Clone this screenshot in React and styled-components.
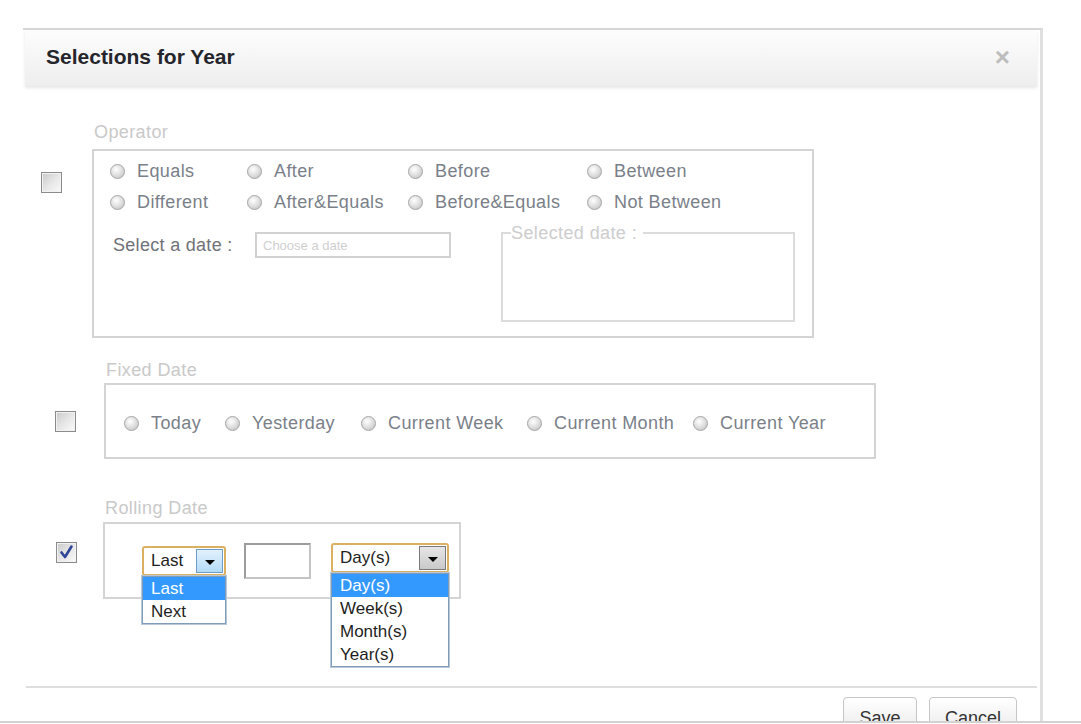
import styled, { createGlobalStyle } from "styled-components";

const GlobalStyle = createGlobalStyle`
  html, body {
    margin: 0;
    padding: 0;
    background: #fff;
    font-family: "Liberation Sans", Arial, sans-serif;
  }
`;

const radioRows = [
  ["Equals", "After", "Before", "Between"],
  ["Different", "After&Equals", "Before&Equals", "Not Between"],
];

const fixedOptions = ["Today", "Yesterday", "Current Week", "Current Month", "Current Year"];

function App() {
  return (
    <>
      <GlobalStyle />
      <Frame>
        <Modal>
          <Header>
            <Title>Selections for Year</Title>
            <Close>×</Close>
          </Header>
          <Body>
            <Section $pad={18} $gap={30} $top={0}>
              <CheckBox $offset={50} />
              <Group>
                <GroupLabel $space={7}>Operator</GroupLabel>
                <Box $w={722} $h={189} $padTop={9} $padLeft={16}>
                  <RadioGrid>
                    {radioRows.map((row) =>
                      row.map((text) => (
                        <RadioItem key={text}>
                          <Radio />
                          <RadioText>{text}</RadioText>
                        </RadioItem>
                      ))
                    )}
                  </RadioGrid>
                  <DateRow>
                    <DatePick>
                      <DateLabel>Select a date :</DateLabel>
                      <DateInput placeholder="Choose a date" />
                    </DatePick>
                    <SelectedSet>
                      <SelectedLegend>Selected date :</SelectedLegend>
                    </SelectedSet>
                  </DateRow>
                </Box>
              </Group>
            </Section>

            <Section $pad={32} $gap={28} $top={22}>
              <CheckBox $offset={51} />
              <Group>
                <GroupLabel $space={3}>Fixed Date</GroupLabel>
                <Box $w={772} $h={76} $padTop={4} $padLeft={18} $center>
                  <FixedRow>
                    {fixedOptions.map((text) => (
                      <RadioItem key={text}>
                        <Radio />
                        <RadioText>{text}</RadioText>
                      </RadioItem>
                    ))}
                  </FixedRow>
                </Box>
              </Group>
            </Section>

            <Section $pad={33} $gap={26} $top={39}>
              <CheckBox $offset={44}>
                <svg width="17" height="17" viewBox="0 0 17 17">
                  <path
                    d="M3.5 8.5 L7 13 L13.5 2.5"
                    fill="none"
                    stroke="#2f4596"
                    strokeWidth="2.6"
                    strokeLinecap="round"
                    strokeLinejoin="round"
                  />
                </svg>
              </CheckBox>
              <Group>
                <GroupLabel $space={4}>Rolling Date</GroupLabel>
                <Box $w={358} $h={77} $padTop={19} $padLeft={37}>
                  <RollRow>
                    <Select $w={84} $shift={3}>
                      <SelectValue>Last</SelectValue>
                      <SelectButton $blue>
                        <Arrow />
                      </SelectButton>
                      <OptionList>
                        <OptionItem $active>Last</OptionItem>
                        <OptionItem>Next</OptionItem>
                      </OptionList>
                    </Select>
                    <NumberBox />
                    <Select $w={118} $shift={0} $left={20}>
                      <SelectValue>Day(s)</SelectValue>
                      <SelectButton>
                        <Arrow />
                      </SelectButton>
                      <OptionList>
                        <OptionItem $active>Day(s)</OptionItem>
                        <OptionItem>Week(s)</OptionItem>
                        <OptionItem>Month(s)</OptionItem>
                        <OptionItem>Year(s)</OptionItem>
                      </OptionList>
                    </Select>
                  </RollRow>
                </Box>
              </Group>
            </Section>
          </Body>
          <Footer>
            <Button $w={74}>Save</Button>
            <Button $w={88}>Cancel</Button>
          </Footer>
        </Modal>
      </Frame>
    </>
  );
}

export default App;

const Frame = styled.div`
  width: 1081px;
  height: 721px;
  overflow: hidden;
  border-bottom: 2px solid #d2d2d2;
`;

const Modal = styled.div`
  margin: 28px 0 0 23px;
  width: 1020px;
  height: 760px;
  box-sizing: border-box;
  border-top: 2px solid #d6d6d6;
  border-right: 3px solid #e0e0e0;
  background: #fff;
`;

const Header = styled.div`
  margin: 0 3px 0 2px;
  height: 56px;
  padding: 0 27px 0 21px;
  display: flex;
  align-items: center;
  justify-content: space-between;
  background: linear-gradient(#fdfdfd, #eeeeee);
  box-shadow: 0 2px 3px rgba(0, 0, 0, 0.1);
`;

const Title = styled.h3`
  margin: 0 0 2px 0;
  font-size: 21px;
  font-weight: bold;
  color: #25262c;
`;

const Close = styled.span`
  font-size: 26px;
  font-weight: bold;
  color: #bdbdbd;
  line-height: 1;
  margin-top: -2px;
`;

const Body = styled.div`
  padding-top: 36px;
`;

const Section = styled.div`
  display: flex;
  align-items: flex-start;
  padding-left: ${(p) => p.$pad}px;
  margin-top: ${(p) => p.$top}px;
  gap: ${(p) => p.$gap}px;
`;

const CheckBox = styled.span`
  flex: none;
  width: 21px;
  height: 21px;
  box-sizing: border-box;
  margin-top: ${(p) => p.$offset}px;
  border: 1px solid #8b8b8b;
  box-shadow: inset 0 0 0 1px #f2f2f2;
  background: linear-gradient(135deg, #c9c9c9 0%, #e6e6e6 50%, #fafafa 100%);
  display: flex;
  align-items: center;
  justify-content: center;
`;

const Group = styled.div`
  display: flex;
  flex-direction: column;
`;

const GroupLabel = styled.div`
  padding-left: 2px;
  font-size: 18px;
  line-height: 20px;
  letter-spacing: 0.4px;
  color: #c9c9c9;
  margin-bottom: ${(p) => p.$space}px;
`;

const Box = styled.div`
  width: ${(p) => p.$w}px;
  height: ${(p) => p.$h}px;
  box-sizing: border-box;
  border: 2px solid #d4d4d4;
  padding: ${(p) => p.$padTop}px 0 0 ${(p) => p.$padLeft}px;
  display: flex;
  flex-direction: column;
  gap: 9px;
  justify-content: ${(p) => (p.$center ? "center" : "flex-start")};
`;

const RadioGrid = styled.div`
  display: grid;
  grid-template-columns: 137px 161px 179px auto;
  row-gap: 9px;
`;

const RadioItem = styled.label`
  display: flex;
  align-items: center;
  gap: 12px;
  height: 22px;
`;

const Radio = styled.span`
  flex: none;
  width: 15px;
  height: 15px;
  box-sizing: border-box;
  border-radius: 50%;
  border: 1px solid #a5a5a5;
  background: radial-gradient(circle at 40% 35%, #ffffff 0%, #e2e2e2 45%, #bcbcbc 100%);
`;

const RadioText = styled.span`
  font-size: 18px;
  letter-spacing: 0.4px;
  color: #7a7f89;
  white-space: nowrap;
`;

const DateRow = styled.div`
  display: flex;
  align-items: flex-start;
`;

const DatePick = styled.div`
  display: flex;
  align-items: center;
  margin-top: 10px;
  padding-left: 3px;
`;

const DateLabel = styled.span`
  width: 142px;
  font-size: 18px;
  letter-spacing: 0.3px;
  color: #6f7278;
`;

const DateInput = styled.input`
  width: 196px;
  height: 26px;
  box-sizing: border-box;
  border: 2px solid #d2d2d2;
  padding: 0 6px;
  font-family: "Liberation Sans", Arial, sans-serif;
  font-size: 13px;
  outline: none;
  &::placeholder {
    color: #cfcfcf;
  }
`;

const SelectedSet = styled.fieldset`
  margin: 0 0 0 50px;
  padding: 0;
  width: 294px;
  height: 100px;
  box-sizing: border-box;
  border: 2px solid #dcdcdc;
`;

const SelectedLegend = styled.legend`
  margin-left: 8px;
  padding: 0 6px 0 0;
  font-size: 18px;
  line-height: 22px;
  letter-spacing: 0.4px;
  color: #cdcdcd;
`;

const FixedRow = styled.div`
  display: grid;
  grid-template-columns: 101px 136px 166px 166px auto;
`;

const RollRow = styled.div`
  display: flex;
  align-items: flex-start;
`;

const Select = styled.div`
  position: relative;
  width: ${(p) => p.$w}px;
  height: 30px;
  margin-top: ${(p) => p.$shift}px;
  margin-left: ${(p) => p.$left || 0}px;
  box-sizing: border-box;
  border: 2px solid #dbb060;
  border-radius: 3px;
  background: #fff;
  display: flex;
  align-items: stretch;
`;

const SelectValue = styled.span`
  flex: 1;
  padding-left: 7px;
  font-size: 17px;
  line-height: 26px;
  color: #1e1e22;
`;

const SelectButton = styled.span`
  width: 27px;
  margin: 1px;
  box-sizing: border-box;
  border: 1px solid ${(p) => (p.$blue ? "#6f9cc6" : "#7a7a7a")};
  background: ${(p) =>
    p.$blue
      ? "linear-gradient(#e2f1fd, #b4dbf7)"
      : "linear-gradient(#e6e6e6, #c9c9c9)"};
  display: flex;
  align-items: center;
  justify-content: center;
  padding-top: 3px;
`;

const Arrow = styled.span`
  width: 0;
  height: 0;
  border-left: 5px solid transparent;
  border-right: 5px solid transparent;
  border-top: 5px solid #000;
`;

const OptionList = styled.div`
  position: absolute;
  top: calc(100% + 2px);
  left: -2px;
  right: -2px;
  z-index: 2;
  background: #fff;
  border: 1px solid #7f9db9;
  box-shadow: 0 0 0 1px #b8c8d8;
`;

const OptionItem = styled.div`
  height: 23px;
  line-height: 23px;
  padding-left: 8px;
  font-size: 17px;
  color: ${(p) => (p.$active ? "#fff" : "#1e1e22")};
  background: ${(p) => (p.$active ? "#3399ff" : "transparent")};
`;

const NumberBox = styled.span`
  width: 67px;
  height: 36px;
  box-sizing: border-box;
  margin-left: 18px;
  border: 2px solid #9c9c9c;
  border-right-color: #c4c4c4;
  border-bottom-color: #c4c4c4;
`;

const Footer = styled.div`
  margin: 87px 3px 0 3px;
  border-top: 2px solid #dedede;
  padding: 9px 20px 0 0;
  display: flex;
  justify-content: flex-end;
  gap: 12px;
`;

const Button = styled.button`
  width: ${(p) => p.$w}px;
  height: 34px;
  padding: 10px 0;
  box-sizing: border-box;
  border: 1px solid #c6c6c6;
  border-radius: 4px;
  background: linear-gradient(#ffffff, #ececec);
  font-family: "Liberation Sans", Arial, sans-serif;
  font-size: 18px;
  line-height: 20px;
  color: #333;
`;
